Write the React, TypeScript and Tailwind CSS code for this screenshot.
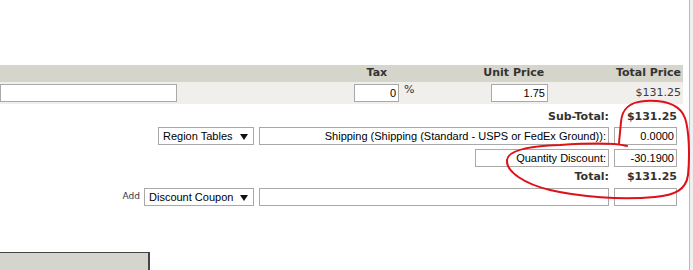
import React from "react";

const verdana = { fontFamily: "'DejaVu Sans', Verdana, sans-serif" };
const arial = { fontFamily: "'Liberation Sans', Arial, sans-serif" };

function Box({ w, children, className = "" }: { w: string; children?: React.ReactNode; className?: string }) {
  return (
    <div
      className={`${w} h-[18px] shrink-0 border border-[#a9a9a9] bg-white flex items-center justify-end pr-[2px] text-[11px] text-black whitespace-nowrap overflow-hidden ${className}`}
      style={arial}
    >
      {children}
    </div>
  );
}

function Select({ w, label }: { w: string; label: string }) {
  return (
    <div
      className={`${w} h-[18px] shrink-0 border border-[#a9a9a9] bg-white flex items-center justify-between pl-[4px] pr-[5px] text-[11px] text-black whitespace-nowrap`}
      style={arial}
    >
      <span>{label}</span>
      <svg width="8" height="6" viewBox="0 0 8 6" className="mt-[1px]">
        <polygon points="0,0 8,0 4,6" fill="#111" />
      </svg>
    </div>
  );
}

export default function App() {
  return (
    <div className="w-[693px] h-[270px] overflow-hidden bg-white flex relative">
      <div className="w-[689px] shrink-0 flex flex-col">
        <div className="h-[65px]" />
        {/* header */}
        <div
          className="w-[683px] h-[17px] bg-[#d6d5cb] flex items-center text-[11px] font-bold text-[#333]"
          style={verdana}
        >
          <div className="w-[345px]" />
          <div className="w-[70px] text-center">Tax</div>
          <div className="w-[206px] text-center">Unit Price</div>
          <div className="flex-1 flex justify-end pr-[2px] whitespace-nowrap">Total Price</div>
        </div>
        {/* item row */}
        <div className="w-[683px] h-[22px] bg-[#f0efeb] flex items-center">
          <div className="w-[345px] flex">
            <Box w="w-[177px]" />
          </div>
          <div className="w-[70px] flex items-center pl-[9px]">
            <Box w="w-[45px]">0</Box>
            <span className="ml-[5px] -mt-[5px] text-[11px] text-[#333]" style={verdana}>
              %
            </span>
          </div>
          <div className="w-[206px] flex pl-[76px]">
            <Box w="w-[57px]">1.75</Box>
          </div>
          <div className="flex-1 flex justify-end pr-[2px] text-[11px] text-[#3a3a48]" style={verdana}>
            $131.25
          </div>
        </div>
        {/* summary */}
        <div className="flex flex-col pr-[12px]">
          <div
            className="h-[23px] pt-[3px] flex items-center justify-end text-[11px] font-bold text-[#333]"
            style={verdana}
          >
            <span>Sub-Total:</span>
            <span className="w-[68px] text-right">$131.25</span>
          </div>
          <div className="h-[18px] flex items-center justify-end gap-[5px]">
            <Select w="w-[96px]" label="Region Tables" />
            <Box w="w-[350px]" className="pr-[1px]">
              Shipping (Shipping (Standard - USPS or FedEx Ground)):
            </Box>
            <Box w="w-[63px]">0.0000</Box>
          </div>
          <div className="h-[18px] mt-[4px] flex items-center justify-end gap-[5px]">
            <Box w="w-[134px]" className="pr-[1px]">
              Quantity Discount:
            </Box>
            <Box w="w-[63px]">-30.1900</Box>
          </div>
          <div
            className="h-[21px] flex items-center justify-end text-[11px] font-bold text-[#333]"
            style={verdana}
          >
            <span>Total:</span>
            <span className="w-[68px] text-right">$131.25</span>
          </div>
          <div className="h-[18px] flex items-center justify-end">
            <span className="text-[9px] text-[#334] mr-[4px]" style={verdana}>
              Add
            </span>
            <Select w="w-[110px]" label="Discount Coupon" />
            <Box w="w-[350px] ml-[5px]" />
            <Box w="w-[63px] ml-[5px]" />
          </div>
        </div>
        <div className="mt-[46px] w-[150px] h-[18px] bg-[#d6d5cd] border-t border-r-2 border-[#454545]" />
      </div>
      <div className="w-[1px] h-full bg-[#b8b8b8]" />
      <div className="flex-1 h-full bg-[#f0f0f0]" />
      <svg className="absolute inset-0 pointer-events-none" width="693" height="270" viewBox="0 0 693 270">
        <path
          d="M 627 146 C 615 143, 590 143, 560 145 C 530 146, 508 150, 507 160 C 506 172, 525 184, 550 190 C 580 197, 620 200, 655 197 C 675 195, 686 190, 688 175 C 690 155, 689 130, 685 118 C 680 105, 665 100, 645 101 C 628 102, 622 110, 621 122 L 619 143"
          fill="none"
          stroke="#e0101a"
          strokeWidth="2"
          strokeLinecap="round"
          strokeLinejoin="round"
        />
      </svg>
    </div>
  );
}
